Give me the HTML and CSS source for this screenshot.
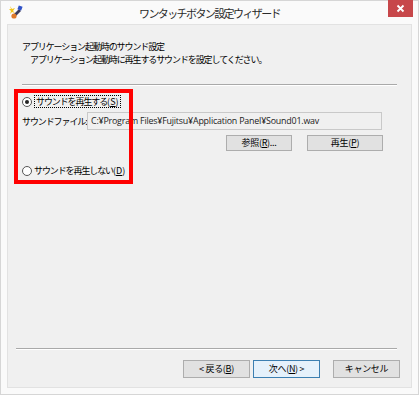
FILE: index.html
```html
<!DOCTYPE html>
<html lang="ja">
<head>
<meta charset="utf-8">
<link rel="stylesheet" href="styles.css">
</head>
<body>
<div class="window">
  <div class="titlebar">
    <svg class="app-icon" width="16" height="16" viewBox="0 0 16 16">
      <path d="M5 11 L11 5 L13 7 L7 13 Z" fill="#3a3a5a"/>
      <circle cx="6" cy="12" r="2.6" fill="#e07a2a"/>
      <rect x="10" y="2" width="4" height="4" fill="#2f52c8" transform="rotate(20 12 4)"/>
      <path d="M2 2 L4 5 L7 4 L5 7 L7 9 L4 8 L2 10 L3 7 L1 5 L3 5 Z" fill="#f3c419"/>
    </svg>
    <div class="title">ワンタッチボタン設定ウィザード</div>
    <div class="close">
      <svg width="9" height="9" viewBox="0 0 9 9"><path d="M1.5 1.5 L7.5 7.5 M7.5 1.5 L1.5 7.5" stroke="#fff" stroke-width="1.8"/></svg>
    </div>
  </div>
  <div class="client">
    <div class="header">
      <div class="h-title">アプリケーション起動時のサウンド設定</div>
      <div class="h-sub">アプリケーション起動時に再生するサウンドを設定してください。</div>
    </div>
    <div class="sep top-sep"></div>
    <div class="body">
      <div class="radio-row">
        <span class="radio checked"></span>
        <span class="focus">サウンドを再生する<span class="mn">(<u>S</u>)</span></span>
      </div>
      <div class="file-row">
        <span class="file-label">サウンドファイル<span class="mn">:</span></span>
        <div class="textbox">C:¥Program Files¥Fujitsu¥Application Panel¥Sound01.wav</div>
      </div>
      <div class="btn-row">
        <button class="btn small">参照(<u>R</u>)...</button>
        <button class="btn small wide">再生(<u>P</u>)</button>
      </div>
      <div class="radio-row second">
        <span class="radio"></span>
        <span class="label">サウンドを再生しない<span class="mn">(<u>D</u>)</span></span>
      </div>
      <div class="annot"></div>
    </div>
    <div class="spacer"></div>
    <div class="sep bottom-sep"></div>
    <div class="footer">
      <button class="btn nav">&lt;&nbsp;戻る(<u>B</u>)</button>
      <button class="btn nav default">次へ(<u>N</u>)&nbsp;&gt;</button>
      <button class="btn nav cancel">キャンセル</button>
    </div>
  </div>
</div>
</body>
</html>
```

FILE: styles.css
```css
* { box-sizing: border-box; }
html, body { margin: 0; padding: 0; }
body {
  width: 419px;
  height: 395px;
  font-family: "Noto Sans CJK JP", "Noto Sans", sans-serif;
  font-size: 9px;
  letter-spacing: -1.1px;
  color: #000;
  background: #fff;
}
.mn { letter-spacing: 0; }
.window {
  width: 419px;
  height: 395px;
  background: #fafafa;
  border: 1px solid #d6d6d6;
  display: flex;
  flex-direction: column;
}
.titlebar {
  height: 23px;
  display: flex;
  align-items: center;
  position: relative;
  flex: none;
}
.app-icon { margin-left: 7px; margin-top: -2px; }
.title {
  position: absolute;
  left: 0; right: 0; top: 4px;
  text-align: center;
  font-size: 11px;
  letter-spacing: -1.6px;
  color: #2a2a2a;
  line-height: 16px;
}
.close {
  position: absolute;
  top: -1px;
  right: 5px;
  width: 25px;
  height: 17px;
  background: #c7474a;
  display: flex;
  align-items: center;
  justify-content: center;
}
.client {
  flex: 1;
  margin: 0 6px 6px 6px;
  background: #f0f0f0;
  border: 1px solid #e2e2e2;
  display: flex;
  flex-direction: column;
  position: relative;
}
.header { padding: 15px 0 0 14px; line-height: 13px; }
.h-sub { padding-left: 8px; }
.sep {
  height: 1px;
  background: #a9a9a9;
  border-bottom: 1px solid #fff;
  box-sizing: content-box;
}
.top-sep { margin: 18px 14px 0 14px; }
.body { position: relative; padding: 9px 0 0 14px; }
.radio-row { display: flex; align-items: center; height: 13px; white-space: nowrap; }
.radio {
  width: 10px; height: 10px;
  border-radius: 50%;
  border: 1px solid #555;
  background: #fff;
  margin-right: 2px;
  position: relative;
  flex: none;
}
.radio.checked::after {
  content: "";
  position: absolute;
  left: 2px; top: 2px;
  width: 4px; height: 4px;
  border-radius: 50%;
  background: #222;
}
.focus { border: 1px dotted #000; line-height: 11px; padding: 0 1px 0 1px; }
.file-row { display: flex; align-items: center; margin-top: 4px; white-space: nowrap; }
.file-label { width: 65px; flex: none; }
.textbox {
  width: 295px;
  height: 18px;
  border: 1px solid #c9c9c9;
  background: #f0f0f0;
  line-height: 16px;
  padding-left: 3px;
  font-family: "Open Sans", "Noto Sans", sans-serif;
  font-size: 8.9px;
  letter-spacing: -0.2px;
  color: #222;
}
.btn {
  font-family: inherit;
  font-size: 9px;
  letter-spacing: -0.3px;
  color: #000;
  background: #e1e1e1;
  border: 1px solid #adadad;
  border-radius: 0;
  padding: 0;
  height: 16px;
  line-height: 14px;
}
.btn-row { display: flex; justify-content: flex-end; gap: 15px; margin-top: 5px; margin-right: 28px; }
.btn.small { width: 66px; }
.btn.wide { width: 76px; }
.second { margin-top: 13px; }
.annot {
  position: absolute;
  left: 6px; top: 3px;
  width: 119px; height: 95px;
  border: 4px solid #ff0000;
}
.spacer { flex: 1; }
.bottom-sep { margin: 0 14px 0 8px; }
.footer { display: flex; justify-content: flex-end; padding: 10px 11px 9px 0; gap: 3px; }
.btn.nav { width: 67px; height: 18px; }
.btn.default { border-color: #3c7fb1; background: #e5f1fb; }
.btn.cancel { margin-left: 10px; }
```
